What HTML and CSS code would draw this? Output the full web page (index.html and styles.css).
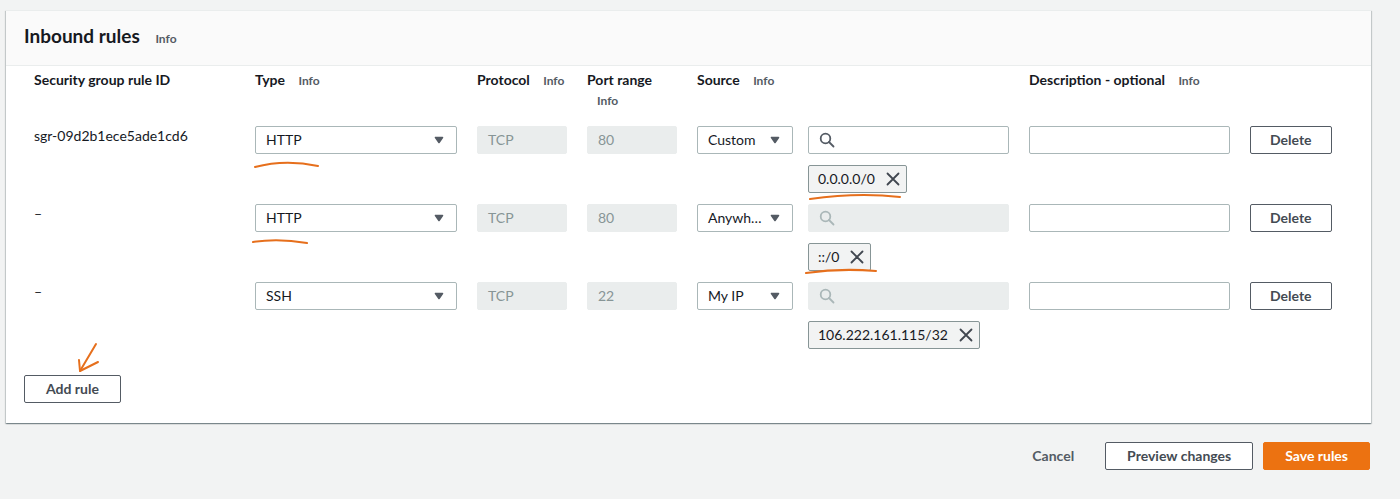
FILE: index.html
```html
<!DOCTYPE html>
<html lang="en">
<head>
<meta charset="utf-8">
<title>Inbound rules</title>
<link rel="stylesheet" href="styles.css">
</head>
<body>
<div class="page">
  <section class="card">
    <header class="card-header">
      <h2 class="card-title">Inbound rules <a class="info info-title">Info</a></h2>
    </header>
    <div class="card-body">
      <div class="rules">
        <div class="rules-head">
          <div>Security group rule ID</div>
          <div>Type <a class="info">Info</a></div>
          <div>Protocol <a class="info">Info</a></div>
          <div>Port range <a class="info">Info</a></div>
          <div>Source <a class="info">Info</a></div>
          <div>Description - optional <a class="info">Info</a></div>
          <div></div>
        </div>

        <div class="rule">
          <div class="rule-id">sgr-09d2b1ece5ade1cd6</div>
          <div class="field select"><span class="sel-text">HTTP</span><svg class="caret" viewBox="0 0 16 16"><path d="M4.5 5.5h7l-3.5 5z"/></svg></div>
          <div class="field disabled">TCP</div>
          <div class="field disabled">80</div>
          <div class="source">
            <div class="field select source-select"><span class="sel-text">Custom</span><svg class="caret" viewBox="0 0 16 16"><path d="M4.5 5.5h7l-3.5 5z"/></svg></div>
            <div class="value">
              <div class="field search"><svg class="search-icon" viewBox="0 0 16 16"><circle cx="6.5" cy="6.5" r="4.8"/><path d="M10 10l4.5 4.5"/></svg></div>
              <div class="token"><span>0.0.0.0/0</span><svg class="dismiss" viewBox="0 0 16 16"><path d="M2.5 2.5l11 11M13.5 2.5l-11 11"/></svg></div>
            </div>
          </div>
          <div class="field"></div>
          <div><button class="btn btn-delete">Delete</button></div>
        </div>

        <div class="rule">
          <div class="rule-id">–</div>
          <div class="field select"><span class="sel-text">HTTP</span><svg class="caret" viewBox="0 0 16 16"><path d="M4.5 5.5h7l-3.5 5z"/></svg></div>
          <div class="field disabled">TCP</div>
          <div class="field disabled">80</div>
          <div class="source">
            <div class="field select source-select"><span class="sel-text">Anywh…</span><svg class="caret" viewBox="0 0 16 16"><path d="M4.5 5.5h7l-3.5 5z"/></svg></div>
            <div class="value">
              <div class="field search disabled"><svg class="search-icon" viewBox="0 0 16 16"><circle cx="6.5" cy="6.5" r="4.8"/><path d="M10 10l4.5 4.5"/></svg></div>
              <div class="token"><span>::/0</span><svg class="dismiss" viewBox="0 0 16 16"><path d="M2.5 2.5l11 11M13.5 2.5l-11 11"/></svg></div>
            </div>
          </div>
          <div class="field"></div>
          <div><button class="btn btn-delete">Delete</button></div>
        </div>

        <div class="rule">
          <div class="rule-id">–</div>
          <div class="field select"><span class="sel-text">SSH</span><svg class="caret" viewBox="0 0 16 16"><path d="M4.5 5.5h7l-3.5 5z"/></svg></div>
          <div class="field disabled">TCP</div>
          <div class="field disabled">22</div>
          <div class="source">
            <div class="field select source-select"><span class="sel-text">My IP</span><svg class="caret" viewBox="0 0 16 16"><path d="M4.5 5.5h7l-3.5 5z"/></svg></div>
            <div class="value">
              <div class="field search disabled"><svg class="search-icon" viewBox="0 0 16 16"><circle cx="6.5" cy="6.5" r="4.8"/><path d="M10 10l4.5 4.5"/></svg></div>
              <div class="token"><span>106.222.161.115/32</span><svg class="dismiss" viewBox="0 0 16 16"><path d="M2.5 2.5l11 11M13.5 2.5l-11 11"/></svg></div>
            </div>
          </div>
          <div class="field"></div>
          <div><button class="btn btn-delete">Delete</button></div>
        </div>
      </div>
      <button class="btn add-rule">Add rule</button>
    </div>
  </section>

  <div class="actions">
    <button class="btn btn-link">Cancel</button>
    <button class="btn">Preview changes</button>
    <button class="btn btn-primary">Save rules</button>
  </div>

  <svg class="marks" viewBox="0 0 1400 499" width="1400" height="499">
    <path d="M255 167 Q285 159 318 166"/>
    <path d="M810 199 Q858 192 900 197"/>
    <path d="M253 242 Q278 238 307 243"/>
    <path d="M806 273 Q840 268 876 271"/>
    <path d="M96 344 L80 371"/>
    <path d="M79 360 L80 371 L98 362"/>
  </svg>
</div>
</body>
</html>
```

FILE: styles.css
```css
html, body {
  margin: 0;
  background: #f2f3f3;
}

body {
  font-family: Lato, "Noto Sans", sans-serif;
  font-size: 14px;
  line-height: 20px;
  color: #16191f;
}

.page {
  position: relative;
  height: 499px;
  box-sizing: border-box;
  padding: 10px 29px 0 6px;
}

.card {
  background: #fff;
  border-top: 1px solid #eaeded;
  box-shadow: 0 1px 1px 0 rgba(0, 28, 36, 0.3),
              1px 1px 1px 0 rgba(0, 28, 36, 0.15),
              -1px 1px 1px 0 rgba(0, 28, 36, 0.15);
}

.card-header {
  height: 54px;
  background: #fafafa;
  border-bottom: 1px solid #eaeded;
  padding: 0 18px 0 18px;
  display: flex;
  align-items: center;
}

.card-title {
  margin: 0;
  font-size: 19px;
  line-height: 22px;
  font-weight: 700;
  color: #16191f;
  position: relative;
  top: -1px;
}

.info {
  font-size: 12px;
  font-weight: 700;
  color: #545b64;
  text-decoration: none;
  margin-left: 10px;
}

.info-title {
  margin-left: 11px;
}

.card-body {
  padding: 4px 18px 20px 18px;
}

.rules {
  margin-left: 10px;
  display: flex;
  flex-direction: column;
  gap: 11px;
}

.rules-head,
.rule {
  display: grid;
  grid-template-columns: 201px 202px 90px 90px 312px 201px 83px;
  column-gap: 20px;
  align-items: start;
}

.rules-head {
  height: 40px;
  margin-bottom: 5px;
  font-weight: 700;
}

.rule-id {
  line-height: 20px;
}

.field {
  height: 28px;
  box-sizing: border-box;
  border: 1px solid #aab7b8;
  border-radius: 2px;
  background: #fff;
  padding: 0 10px;
  display: flex;
  align-items: center;
  color: #16191f;
}

.field.disabled {
  background: #eaeded;
  border-color: #eaeded;
  color: #879596;
}

.select {
  justify-content: space-between;
  gap: 4px;
}

.sel-text {
  flex: 1;
  min-width: 0;
  white-space: nowrap;
}

.caret {
  width: 16px;
  height: 16px;
  flex: none;
  margin-right: -1px;
}

.caret path {
  fill: #545b64;
  stroke: #545b64;
  stroke-width: 1.6;
  stroke-linejoin: round;
}

.source {
  display: flex;
  gap: 15px;
  align-items: flex-start;
}

.source-select {
  width: 96px;
  flex: none;
}

.value {
  width: 201px;
  display: flex;
  flex-direction: column;
  align-items: flex-start;
}

.search {
  width: 100%;
}

.search-icon {
  width: 16px;
  height: 16px;
  fill: none;
  stroke: #545b64;
  stroke-width: 1.8;
  stroke-linecap: round;
}

.search.disabled .search-icon {
  stroke: #aab7b8;
}

.token {
  margin-top: 11px;
  height: 28px;
  box-sizing: border-box;
  display: inline-flex;
  align-items: center;
  gap: 10px;
  padding: 0 5px 0 9px;
  background: #f2f3f3;
  border: 1px solid #879596;
  border-radius: 2px;
  color: #16191f;
}

.dismiss {
  width: 16px;
  height: 16px;
  fill: none;
  stroke: #414750;
  stroke-width: 1.8;
  stroke-linecap: round;
}

.btn {
  height: 28px;
  box-sizing: border-box;
  padding: 0 21px 1px;
  border: 1px solid #545b64;
  border-radius: 2px;
  background: #fff;
  font-family: Lato, "Noto Sans", sans-serif;
  font-size: 14px;
  font-weight: 700;
  color: #444b53;
  cursor: pointer;
}

.btn-delete {
  padding: 0 19px 1px;
}

.add-rule {
  margin-top: 26px;
  display: block;
}

.actions {
  display: flex;
  justify-content: flex-end;
  gap: 10px;
  margin-top: 19px;
  margin-right: 1px;
}

.btn-link {
  border-color: transparent;
  background: transparent;
  color: #545b64;
  padding: 0 20px 1px;
}

.btn-primary {
  background: #ec7211;
  border-color: #ec7211;
  color: #fff;
}

.marks {
  position: absolute;
  top: 0;
  left: 0;
  pointer-events: none;
  fill: none;
  stroke: #e66f1c;
  stroke-width: 2;
  stroke-linecap: round;
  stroke-linejoin: round;
}
```
